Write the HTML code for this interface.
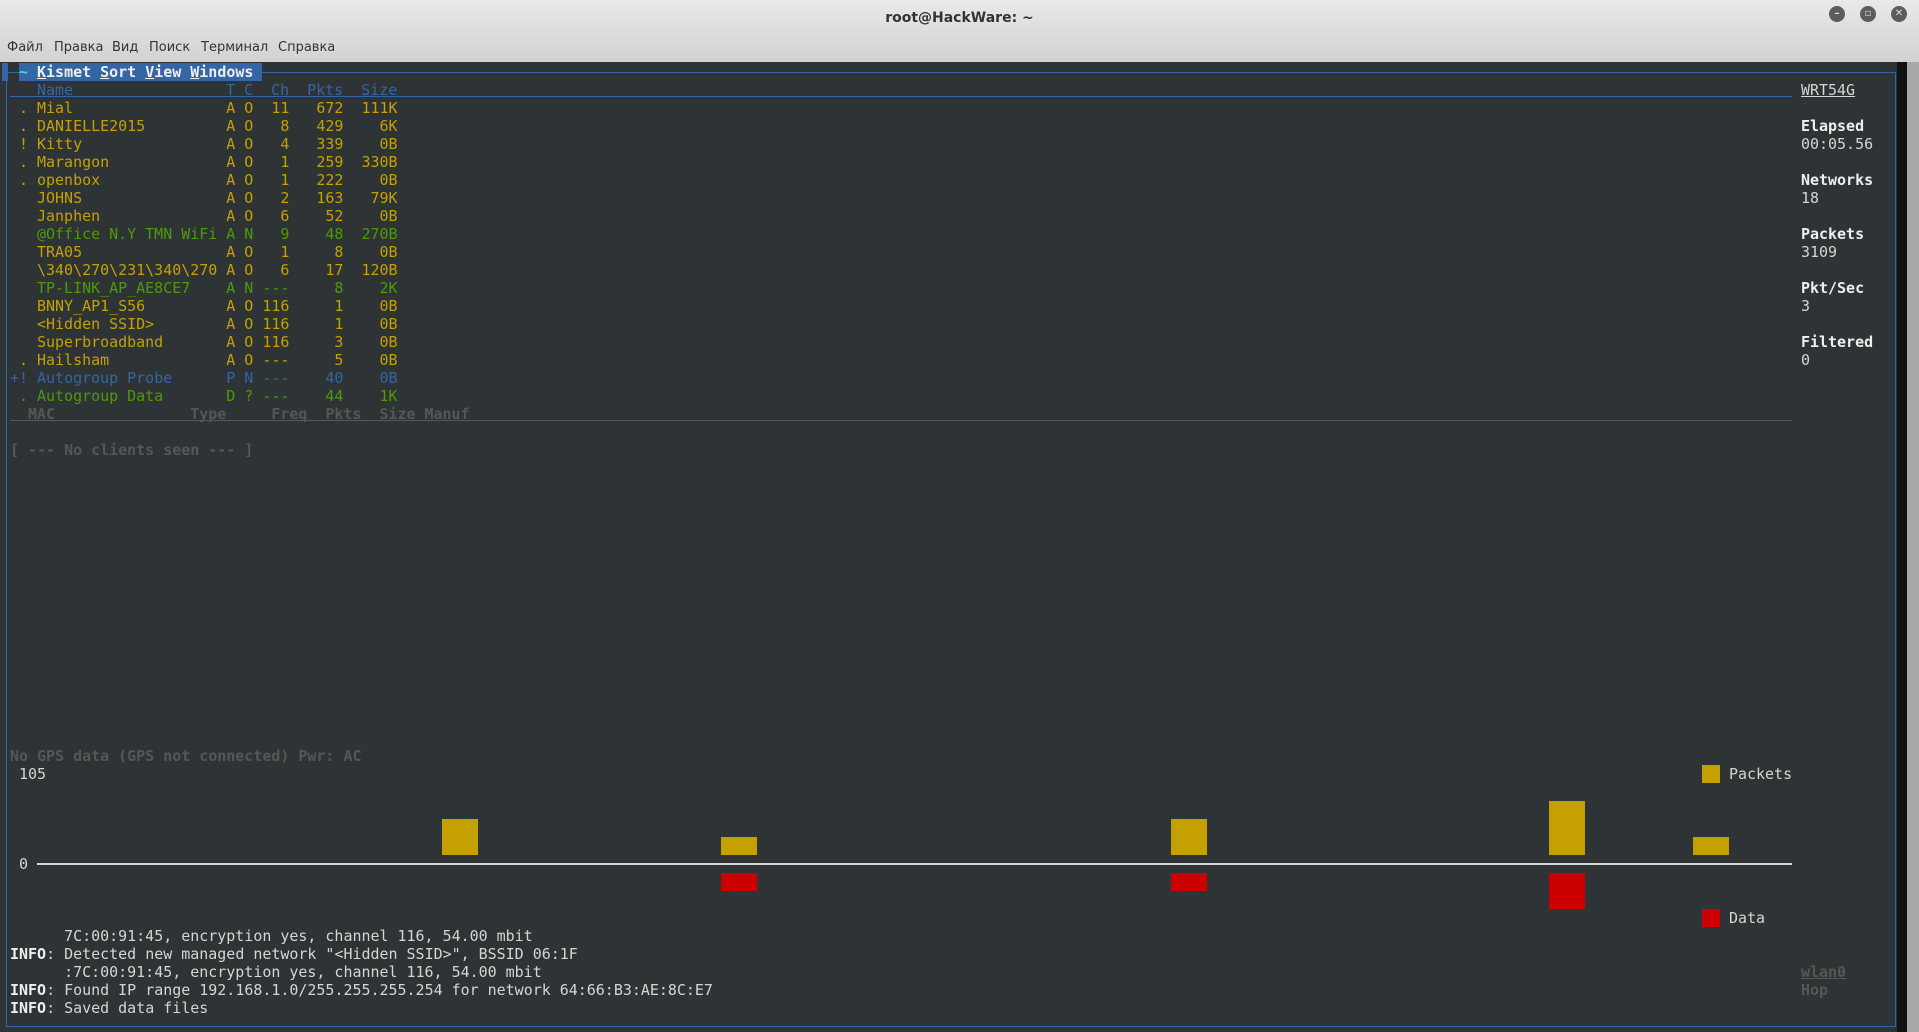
<!DOCTYPE html>
<html><head><meta charset="utf-8"><style>
*{margin:0;padding:0;box-sizing:border-box}
body{width:1919px;height:1032px;overflow:hidden;background:#2e3436;position:relative;font-family:"DejaVu Sans Mono","Liberation Mono",monospace;font-size:14.98px;}
#top{position:absolute;left:0;top:0;width:1919px;height:62px;background:linear-gradient(#e9e9e9,#d2d2d2);}
#title{position:absolute;left:0;width:1919px;top:10px;text-align:center;font:bold 14px "DejaVu Sans","Liberation Sans",sans-serif;color:#333;}
.menu{position:absolute;top:40px;font:13px "DejaVu Sans","Liberation Sans",sans-serif;color:#333;}
.btn{position:absolute;top:6px;width:16px;height:16px;border-radius:50%;background:#5c5c5c;color:#ddd;font:bold 10px "DejaVu Sans",sans-serif;text-align:center;line-height:16px;}
#term{position:absolute;left:0;top:62px;width:1907px;height:970px;background:#2e3436;}
#edge{position:absolute;left:1897px;top:62px;width:10px;height:970px;background:#111;}
#scroll{position:absolute;left:1907px;top:62px;width:12px;height:970px;background:#a8a8a8;}
.r{position:absolute;line-height:18px;height:18px;white-space:pre;}
.y{color:#c4a000}.g{color:#4e9a06}.b{color:#3465a4}.d{color:#555753;font-weight:bold}.w{color:#d3d7cf}.W{color:#eeeeec;font-weight:bold}
.line{position:absolute;background:#3465a4}
</style></head><body>
<div id="top"><div id="title">root@HackWare: ~</div>
<div class="menu" style="left:7px">Файл</div><div class="menu" style="left:54px">Правка</div><div class="menu" style="left:112px">Вид</div><div class="menu" style="left:149px">Поиск</div><div class="menu" style="left:201px">Терминал</div><div class="menu" style="left:278px">Справка</div>
<div class="btn" style="left:1829px">–</div><div class="btn" style="left:1860px">▫</div><div class="btn" style="left:1891px">✕</div>
</div>
<div id="term"></div><div id="edge"></div><div id="scroll"></div>
<div class="line" style="left:2px;top:63px;width:6px;height:18px"></div>
<div class="line" style="left:6px;top:72px;width:1px;height:955px"></div>
<div class="line" style="left:6px;top:72px;width:13px;height:1px"></div>
<div class="line" style="left:262px;top:72px;width:1634px;height:1px"></div>
<div class="line" style="left:1895px;top:72px;width:1px;height:955px"></div>
<div class="line" style="left:6px;top:1026px;width:1890px;height:1px"></div>
<div class="line" style="left:10px;top:96px;width:1782px;height:1px"></div>
<div style="position:absolute;left:10px;top:420px;width:1782px;height:1px;background:#555753"></div>
<div class="r" style="left:19px;top:63px;width:243px;background:#3465a4"><span style="color:#34e2e2;font-weight:bold">~</span><span class="W"> <u>K</u>ismet <u>S</u>ort <u>V</u>iew <u>W</u>indows</span></div>
<div class="r b" style="left:37px;top:81px">Name</div>
<div class="r b" style="left:226px;top:81px">T C  Ch  Pkts  Size</div>
<div style="position:absolute;left:0;top:99px">
<div class="r y" style="left:19px;top:0">. Mial                 A O  11   672  111K</div>
<div class="r y" style="left:19px;top:18px">. DANIELLE2015         A O   8   429    6K</div>
<div class="r y" style="left:19px;top:36px">! Kitty                A O   4   339    0B</div>
<div class="r y" style="left:19px;top:54px">. Marangon             A O   1   259  330B</div>
<div class="r y" style="left:19px;top:72px">. openbox              A O   1   222    0B</div>
<div class="r y" style="left:19px;top:90px">  JOHNS                A O   2   163   79K</div>
<div class="r y" style="left:19px;top:108px">  Janphen              A O   6    52    0B</div>
<div class="r g" style="left:19px;top:126px">  @Office N.Y TMN WiFi A N   9    48  270B</div>
<div class="r y" style="left:19px;top:144px">  TRA05                A O   1     8    0B</div>
<div class="r y" style="left:19px;top:162px">  \340\270\231\340\270 A O   6    17  120B</div>
<div class="r g" style="left:19px;top:180px">  TP-LINK_AP_AE8CE7    A N ---     8    2K</div>
<div class="r y" style="left:19px;top:198px">  BNNY_AP1_S56         A O 116     1    0B</div>
<div class="r y" style="left:19px;top:216px">  &lt;Hidden SSID&gt;        A O 116     1    0B</div>
<div class="r y" style="left:19px;top:234px">  Superbroadband       A O 116     3    0B</div>
<div class="r y" style="left:19px;top:252px">. Hailsham             A O ---     5    0B</div>
<div class="r b" style="left:10px;top:270px">+! Autogroup Probe      P N ---    40    0B</div>
<div class="r g" style="left:19px;top:288px">. Autogroup Data       D ? ---    44    1K</div>
</div>
<div class="r d" style="left:28px;top:405px">MAC               Type     Freq  Pkts  Size Manuf</div>
<div class="r d" style="left:10px;top:441px">[ --- No clients seen --- ]</div>
<div class="r w" style="left:1801px;top:81px"><u>WRT54G</u></div>
<div class="r W" style="left:1801px;top:117px">Elapsed</div><div class="r w" style="left:1801px;top:135px">00:05.56</div>
<div class="r W" style="left:1801px;top:171px">Networks</div><div class="r w" style="left:1801px;top:189px">18</div>
<div class="r W" style="left:1801px;top:225px">Packets</div><div class="r w" style="left:1801px;top:243px">3109</div>
<div class="r W" style="left:1801px;top:279px">Pkt/Sec</div><div class="r w" style="left:1801px;top:297px">3</div>
<div class="r W" style="left:1801px;top:333px">Filtered</div><div class="r w" style="left:1801px;top:351px">0</div>
<div class="r d" style="left:10px;top:747px">No GPS data (GPS not connected) Pwr: AC</div>
<div class="r w" style="left:19px;top:765px">105</div>
<div class="r w" style="left:19px;top:855px">0</div>
<div style="position:absolute;left:37px;top:863px;width:1755px;height:2px;background:#d3d7cf"></div>
<div style="position:absolute;left:442px;top:819px;width:36px;height:36px;background:#c4a000"></div>
<div style="position:absolute;left:721px;top:837px;width:36px;height:18px;background:#c4a000"></div>
<div style="position:absolute;left:721px;top:873px;width:36px;height:18px;background:#cc0000"></div>
<div style="position:absolute;left:1171px;top:819px;width:36px;height:36px;background:#c4a000"></div>
<div style="position:absolute;left:1171px;top:873px;width:36px;height:18px;background:#cc0000"></div>
<div style="position:absolute;left:1549px;top:801px;width:36px;height:54px;background:#c4a000"></div>
<div style="position:absolute;left:1549px;top:873px;width:36px;height:36px;background:#cc0000"></div>
<div style="position:absolute;left:1693px;top:837px;width:36px;height:18px;background:#c4a000"></div>
<div style="position:absolute;left:1702px;top:765px;width:18px;height:18px;background:#c4a000"></div>
<div class="r w" style="left:1729px;top:765px">Packets</div>
<div style="position:absolute;left:1702px;top:909px;width:18px;height:18px;background:#cc0000"></div>
<div class="r w" style="left:1729px;top:909px">Data</div>
<div class="r w" style="left:10px;top:927px">      7C:00:91:45, encryption yes, channel 116, 54.00 mbit</div>
<div class="r w" style="left:10px;top:945px"><span class="W">INFO</span>: Detected new managed network "&lt;Hidden SSID&gt;", BSSID 06:1F</div>
<div class="r w" style="left:10px;top:963px">      :7C:00:91:45, encryption yes, channel 116, 54.00 mbit</div>
<div class="r w" style="left:10px;top:981px"><span class="W">INFO</span>: Found IP range 192.168.1.0/255.255.255.254 for network 64:66:B3:AE:8C:E7</div>
<div class="r w" style="left:10px;top:999px"><span class="W">INFO</span>: Saved data files</div>
<div class="r d" style="left:1801px;top:963px"><u>wlan0</u></div>
<div class="r d" style="left:1801px;top:981px">Hop</div>
</body></html>
